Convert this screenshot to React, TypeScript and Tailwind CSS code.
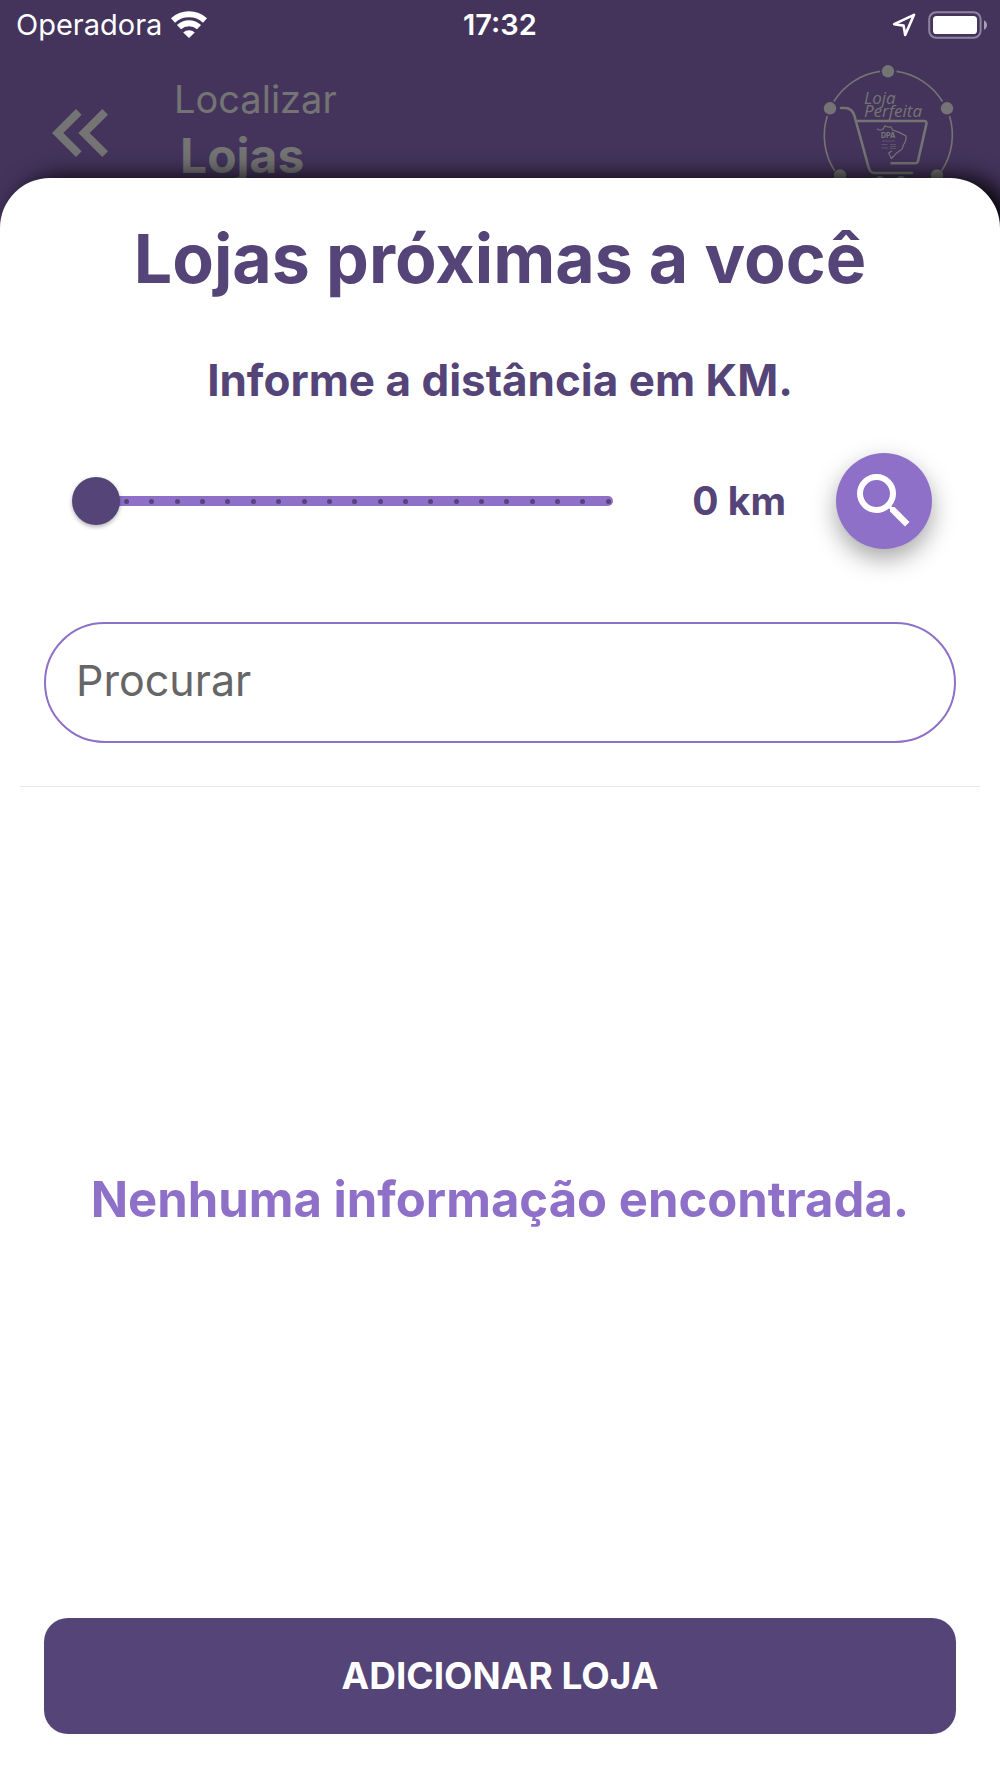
import { useState } from 'react'
import { MdKeyboardDoubleArrowLeft, MdSearch } from 'react-icons/md'

const MAX_KM = 20

function WifiIcon() {
  return (
    <svg width="38" height="28" viewBox="0 0 38 28" fill="none" aria-hidden="true">
      <path d="M3 9.500a23.800 23.800 0 0 1 32 0" stroke="#fff" strokeWidth="6" />
      <path d="M9 16.100a14.800 14.800 0 0 1 20 0" stroke="#fff" strokeWidth="6" />
      <path d="M19 27l-5.800-5.600a8.600 8.600 0 0 1 11.600 0z" fill="#fff" />
    </svg>
  )
}

function LocationIcon() {
  return (
    <svg width="24" height="24" viewBox="0 0 24 24" fill="none" aria-hidden="true">
      <path d="M22 1.800 2.200 11.200l9.400 1.400 1.600 9.400z" stroke="#fff" strokeWidth="2.600" strokeLinejoin="round" />
    </svg>
  )
}

function BatteryIcon() {
  return (
    <svg width="60" height="28" viewBox="0 0 60 28" fill="none" aria-hidden="true">
      <rect x="1.2" y="1.2" width="51.4" height="25.6" rx="7" stroke="#8d84a0" strokeWidth="2" />
      <rect x="5" y="5" width="44" height="18" rx="3.6" fill="#fff" />
      <path d="M56 9.2c4 2.2 4 7.400 0 9.600z" fill="#a79fb6" />
    </svg>
  )
}

function Logo() {
  return (
    <svg width="136" height="136" viewBox="0 0 136 136" fill="none" aria-label="Loja Perfeita" role="img">
      <g stroke="#747474" strokeWidth="1.600">
        <path d="M76.500 7.400A65 65 0 0 1 122.500 37.500" />
        <path d="M129.500 52A65 65 0 0 1 121.500 107" />
        <path d="M60 7.400A65 65 0 0 0 13.800 37.500" />
        <path d="M7.300 52A65 65 0 0 0 14.800 107" />
      </g>
      <g fill="#747474">
        <circle cx="68" cy="7.300" r="6.200" />
        <circle cx="10" cy="44.300" r="6.200" />
        <circle cx="127" cy="44.300" r="6.200" />
        <circle cx="20" cy="111.500" r="6.200" />
        <circle cx="117" cy="111.500" r="6.200" />
      </g>
      <g stroke="#747474" strokeWidth="2.600" strokeLinecap="round" strokeLinejoin="round">
        <path d="M21 44h4c5 0 8 3 9.500 8l14 51c1 4 2.500 6 6 6H92" />
        <path d="M37.500 57H104q3 0 2.400 3L98 97q-.5 2.300-3 2.300H71.500" />
      </g>
      <text fill="#747474" fontFamily="Open Sans, Noto Sans, sans-serif" fontStyle="italic" fontSize="17">
        <tspan x="44" y="40">Loja</tspan>
        <tspan x="44" y="53">Perfeita</tspan>
      </text>
      <path
        d="M57 64.700q2.500 2 4.700 1t3.300-4q3 2 5.700 1l2 3.500q6 1.500 13.300 5.800.5 5-2.700 9-.5 5-4 6-3 2-5 4.500l-3 3-2.600-5.500 3.300-2"
        stroke="#747474"
        strokeWidth="1.200"
        strokeLinejoin="round"
      />
      <text x="61" y="74" fill="#747474" fontFamily="Inter, sans-serif" fontWeight="800" fontSize="7">
        DPA
      </text>
      <path d="M62 77h13M61.500 80.500h6M61.500 84h7M70 80.500h6M70 82.500h6M70 84.500h6" stroke="#747474" strokeOpacity=".5" />
      <circle cx="60" cy="117" r="5" fill="#747474" />
      <circle cx="81" cy="117" r="5" fill="#747474" />
    </svg>
  )
}

function DistanceSlider({ value, onChange }: { value: number; onChange: (km: number) => void }) {
  return (
    <div className="grid min-w-0 flex-1 items-center">
      <div className="col-start-1 row-start-1 ml-6 h-[10px] rounded-full bg-[#8f70c9]" />
      <div className="col-start-1 row-start-1 ml-[52px] mr-[2px] flex justify-between">
        {Array.from({ length: MAX_KM }, (_, i) => (
          <span key={i} className="size-[5px] rounded-full bg-[#554477]" />
        ))}
      </div>
      <input
        id="distance"
        type="range"
        min={0}
        max={MAX_KM}
        value={value}
        onChange={e => onChange(Number(e.target.value))}
        className="col-start-1 row-start-1 h-12 w-full cursor-pointer appearance-none bg-transparent [&::-webkit-slider-thumb]:size-12 [&::-webkit-slider-thumb]:appearance-none [&::-webkit-slider-thumb]:rounded-full [&::-webkit-slider-thumb]:bg-[#554477] [&::-webkit-slider-thumb]:shadow-[0_2px_4px_rgba(0,0,0,0.3)]"
      />
    </div>
  )
}

export default function App() {
  const [distance, setDistance] = useState(0)
  const [search, setSearch] = useState('')

  return (
    <div className="flex min-h-screen flex-col overflow-hidden bg-[#44345c] font-[Inter,sans-serif]">
      {/* Status bar */}
      <div className="grid h-14 grid-cols-[1fr_auto_1fr] items-start px-4 pt-[7px] text-[29px] leading-9 text-white">
        <div className="flex items-center gap-2">
          <span>Operadora</span>
          <WifiIcon />
        </div>
        <span className="font-semibold">17:32</span>
        <div className="-mr-1 flex h-9 items-center justify-end gap-3">
          <LocationIcon />
          <BatteryIcon />
        </div>
      </div>

      <header className="flex h-32 items-start pl-8 pr-11 pt-[15px] text-[#747474]">
        <button type="button" aria-label="Voltar" className="mt-[14px]">
          <MdKeyboardDoubleArrowLeft size={96} />
        </button>
        <div className="ml-[46px] flex-1">
          <p className="text-[38px] leading-[56px]">Localizar</p>
          <h1 className="ml-1.5 text-[48px] font-bold leading-[58px]">Lojas</h1>
        </div>
        <div className="-mt-[7px]">
          <Logo />
        </div>
      </header>

      {/* Bottom sheet over the dimmed header */}
      <main className="relative -mt-1.5 flex flex-1 flex-col rounded-t-[50px] bg-white px-11 pb-11 pt-10 shadow-[12px_0_24px_#000]">
        <h2 className="text-center text-[68px] font-bold leading-[80px] text-[#554477]">
          Lojas próximas a você
        </h2>
        <label htmlFor="distance" className="mt-[54px] text-center text-[44px] font-bold leading-[56px] text-[#554477]">
          Informe a distância em KM.
        </label>

        <div className="mt-[45px] flex items-center gap-[50px] pl-7 pr-6">
          <DistanceSlider value={distance} onChange={setDistance} />
          <output
            htmlFor="distance"
            className="w-[123px] whitespace-nowrap text-right text-[39px] font-bold leading-[56px] text-[#554477]"
          >
            {distance} km
          </output>
          <button
            type="button"
            aria-label="Buscar"
            className="flex size-24 items-center justify-center rounded-full bg-[#8f70c9] text-white shadow-[0_10px_24px_rgba(0,0,0,0.35)]"
          >
            <MdSearch size={72} />
          </button>
        </div>

        <input
          type="search"
          aria-label="Procurar"
          placeholder="Procurar"
          value={search}
          onChange={e => setSearch(e.target.value)}
          className="mt-[73px] h-[121px] rounded-full border-2 border-[#8f70c9] px-[30px] pb-1.5 text-[43px] text-[#554477] outline-none placeholder:text-[#666666]"
        />
        <hr className="-mx-6 mt-[43px] border-[#e8e8e8]" />

        <div className="flex flex-1 items-center justify-center pb-1.5">
          <p className="text-center text-[49px] font-bold leading-[56px] text-[#8f70c9]">
            Nenhuma informação encontrada.
          </p>
        </div>

        <button
          type="button"
          className="h-[116px] rounded-3xl bg-[#554477] text-[37px] font-bold uppercase text-white"
        >
          Adicionar loja
        </button>
      </main>
    </div>
  )
}
